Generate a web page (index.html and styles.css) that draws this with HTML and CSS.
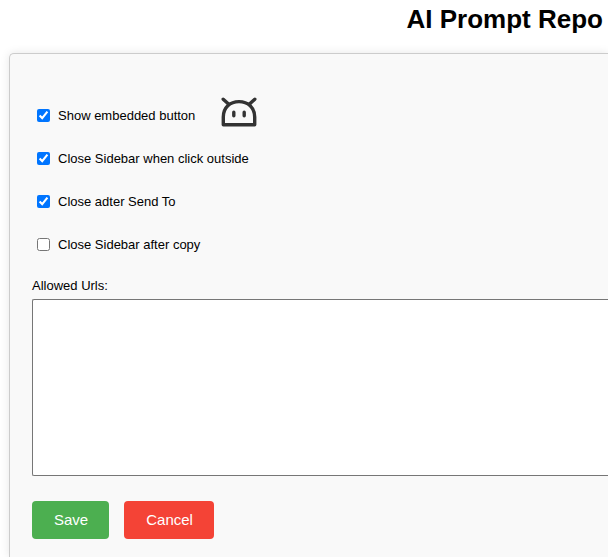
FILE: index.html
```html
<!DOCTYPE html>
<html lang="en">
<head>
<meta charset="utf-8">
<title>AI Prompt Repo</title>
<link rel="stylesheet" href="styles.css">
</head>
<body>
<h1 class="title">AI Prompt Repo</h1>
<form class="card">
  <div class="option">
    <input type="checkbox" id="embedded" checked>
    <label for="embedded">Show embedded button</label>
    <svg class="robot" viewBox="0 0 36 30" fill="none" stroke="#333" stroke-width="3.4" stroke-linecap="round" stroke-linejoin="round" aria-hidden="true">
      <path d="M2.300 27.700V20C2.300 10.500 9 4.600 18 4.600S33.700 10.500 33.700 20V27.700Z"/>
      <path d="M2.200 2.200L7.500 7M33.800 2.200L28.500 7"/>
      <path d="M12.800 15.200V18.800M23.200 15.200V18.800"/>
    </svg>
  </div>
  <div class="option">
    <input type="checkbox" id="outside" checked>
    <label for="outside">Close Sidebar when click outside</label>
  </div>
  <div class="option">
    <input type="checkbox" id="send" checked>
    <label for="send">Close adter Send To</label>
  </div>
  <div class="option">
    <input type="checkbox" id="copy">
    <label for="copy">Close Sidebar after copy</label>
  </div>
  <div class="urls">
    <label for="urls">Allowed Urls:</label>
    <textarea id="urls"></textarea>
  </div>
  <div class="actions">
    <button class="button save" type="button">Save</button>
    <button class="button cancel" type="button">Cancel</button>
  </div>
</form>
</body>
</html>
```
FILE: styles.css
```css
* {
  box-sizing: border-box;
}

body {
  margin: 0;
  min-height: 100vh;
  display: flex;
  flex-direction: column;
  overflow: hidden;
  background: #fff;
  color: #000;
  font-family: "Liberation Sans", Arial, sans-serif;
  font-size: 13px;
}

.title {
  margin: 4px 5px 19px;
  font-size: 26px;
  line-height: 30px;
  text-align: right;
}

/* The card and its text area run flush to the right edge of the window. */
.card {
  flex: 1;
  margin: 0 0 0 9px;
  padding: 40px 0 18px 22px;
  border: 1px solid #ccc;
  border-width: 1px 0 0 1px;
  border-radius: 5px 0 0;
  background: #f9f9f9;
  box-shadow: 0 0 10px rgba(0, 0, 0, 0.1);
}

.option {
  display: flex;
  align-items: center;
  height: 43px;
}

.option input {
  width: 13px;
  height: 13px;
  margin: 0 8px 0 5px;
}

.robot {
  width: 36px;
  height: 30px;
  margin: 0 0 7px 26px;
}

.urls {
  display: grid;
  gap: 3px;
  padding-top: 10px;
  line-height: 20px;
}

.urls textarea {
  width: 100%;
  height: 177px;
  margin: 0;
  border: 1px solid #767676;
  border-right: 0;
  border-radius: 2px 0 0 2px;
  background: #fff;
  resize: none;
}

.actions {
  display: flex;
  gap: 15px;
  padding-top: 25px;
}

.button {
  height: 38px;
  padding: 0 21px 2px 22px;
  border: 0;
  border-radius: 4px;
  color: #fff;
  font-family: inherit;
  font-size: 15px;
}

.save {
  background: #4caf50;
}

.cancel {
  background: #f44336;
}
```
